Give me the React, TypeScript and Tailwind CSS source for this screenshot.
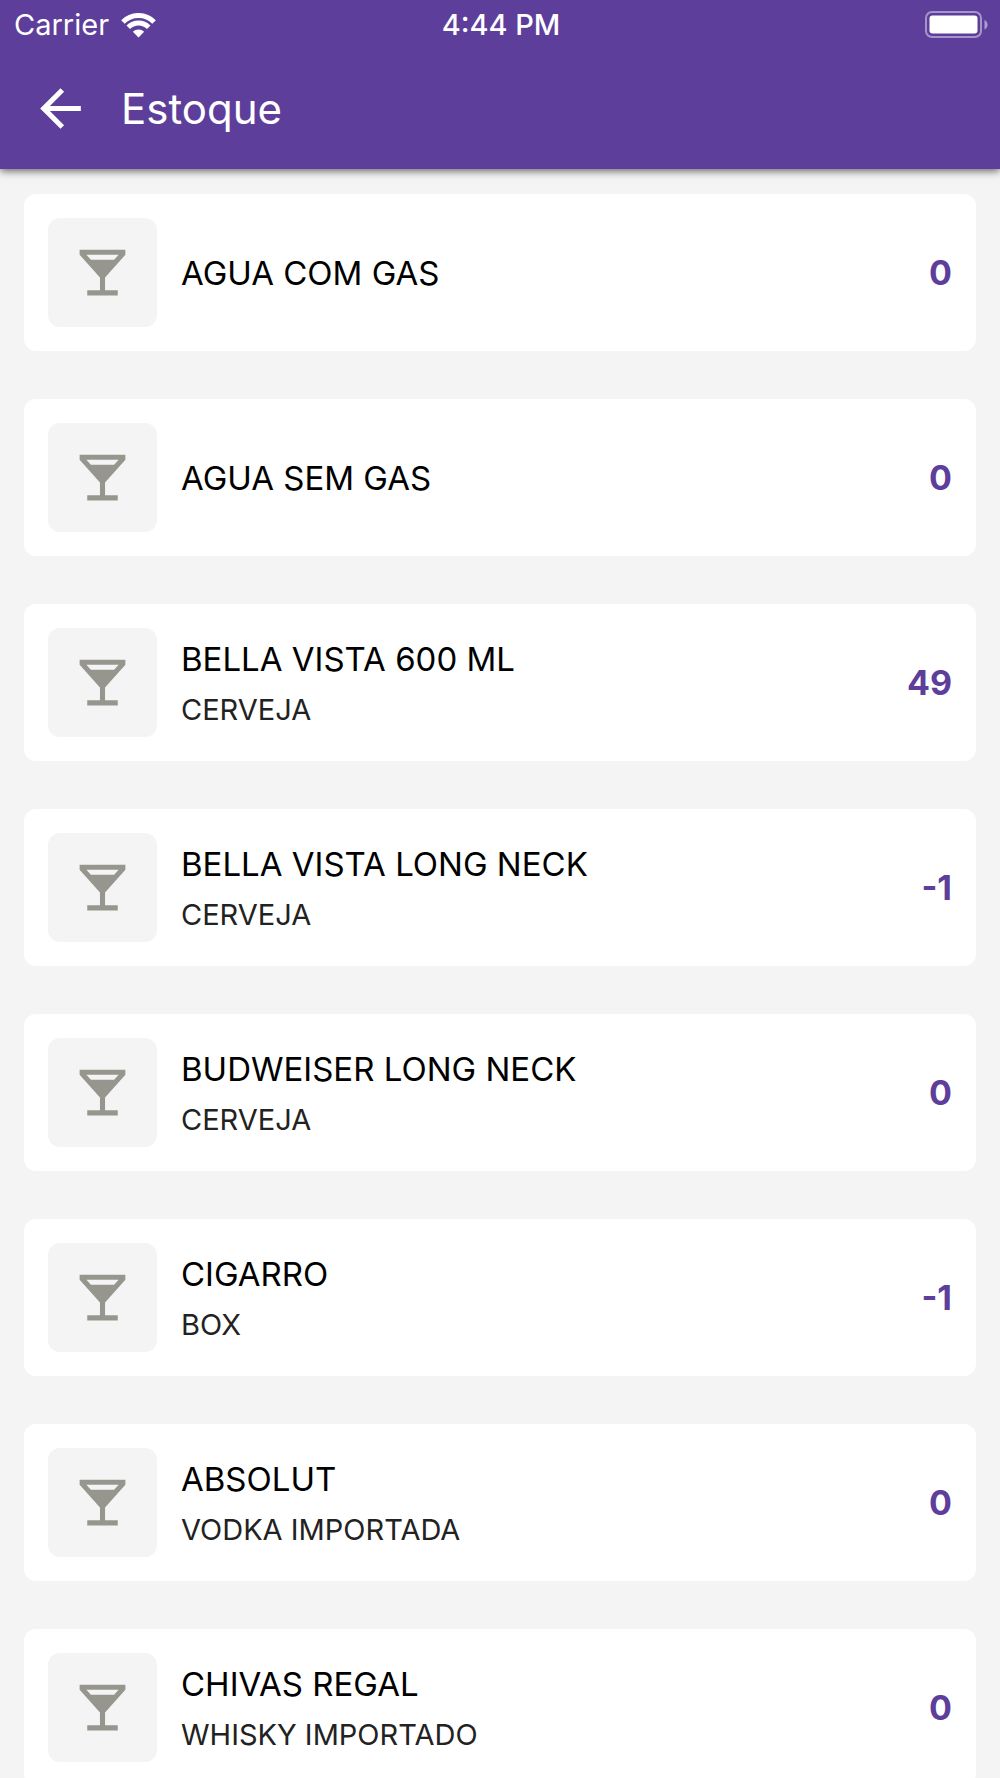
import { MdArrowBack, MdLocalBar } from 'react-icons/md';

type Product = { name: string; category?: string; stock: number };

const products: Product[] = [
    { name: 'AGUA COM GAS', stock: 0 },
    { name: 'AGUA SEM GAS', stock: 0 },
    { name: 'BELLA VISTA 600 ML', category: 'CERVEJA', stock: 49 },
    { name: 'BELLA VISTA LONG NECK', category: 'CERVEJA', stock: -1 },
    { name: 'BUDWEISER LONG NECK', category: 'CERVEJA', stock: 0 },
    { name: 'CIGARRO', category: 'BOX', stock: -1 },
    { name: 'ABSOLUT', category: 'VODKA IMPORTADA', stock: 0 },
    { name: 'CHIVAS REGAL', category: 'WHISKY IMPORTADO', stock: 0 },
];

function WifiIcon() {
    return (
        <svg width="35" height="25" viewBox="0 0 35 25" fill="none" stroke="currentColor" aria-hidden="true">
            <path d="M1.94 8.94a22 22 0 0 1 31.12 0" strokeWidth="5" />
            <path d="M7.25 14.25a14.5 14.5 0 0 1 20.5 0" strokeWidth="5" />
            <path d="M17.5 24.5l-5.66-5.66a8 8 0 0 1 11.32 0z" fill="currentColor" stroke="none" />
        </svg>
    );
}

function BatteryIcon() {
    return (
        <svg width="63" height="28" viewBox="0 0 63 28" fill="none" aria-hidden="true">
            <rect x="1" y="1" width="55" height="25" rx="6" stroke="#fff" strokeOpacity=".45" strokeWidth="2" />
            <rect x="4.5" y="4.5" width="48" height="18" rx="3" fill="#fff" />
            <path d="M59.5 9c4 1.5 4 8 0 9.5z" fill="#fff" fillOpacity=".5" />
        </svg>
    );
}

function StatusBar() {
    return (
        <div className="grid h-[50px] grid-cols-3 items-center pr-3 pl-[14px] text-[29px]">
            <div className="flex items-center gap-3">
                <span>Carrier</span>
                <WifiIcon />
            </div>
            <div className="text-center font-medium">4:44 PM</div>
            <div className="flex justify-end"><BatteryIcon /></div>
        </div>
    );
}

function ProductCard({ product }: { product: Product }) {
    return (
        <li className="flex items-center gap-6 rounded-xl bg-white p-6">
            <div className="flex size-[109px] shrink-0 items-center justify-center rounded-xl bg-[#f4f4f4] text-[#96968f]">
                <MdLocalBar size={61} />
            </div>
            <div className="min-w-0 flex-1">
                <h2 className="text-[33px] leading-[54px] text-black">{product.name}</h2>
                {product.category && <p className="text-[29px] leading-[48px] text-[#222222]">{product.category}</p>}
            </div>
            <span className="text-[34px] font-bold text-[#5d3e9b]">{product.stock}</span>
        </li>
    );
}

export default function App() {
    return (
        <div className="flex h-screen flex-col bg-[#f4f4f4] font-['Inter',sans-serif]">
            <header className="z-10 shrink-0 bg-[#5d3e9b] pb-0.5 text-white shadow-[0_2px_8px_rgba(0,0,0,0.6)]">
                <StatusBar />
                <div className="flex h-[117px] items-center gap-[30px] px-[30px]">
                    <button type="button" aria-label="Voltar"><MdArrowBack size={61} /></button>
                    <h1 className="text-[42px]">Estoque</h1>
                </div>
            </header>
            <main className="flex-1 overflow-y-auto px-6 py-[25px] [scrollbar-width:none]">
                <ul className="flex flex-col gap-12">
                    {products.map(product => <ProductCard key={product.name} product={product} />)}
                </ul>
            </main>
        </div>
    );
}
